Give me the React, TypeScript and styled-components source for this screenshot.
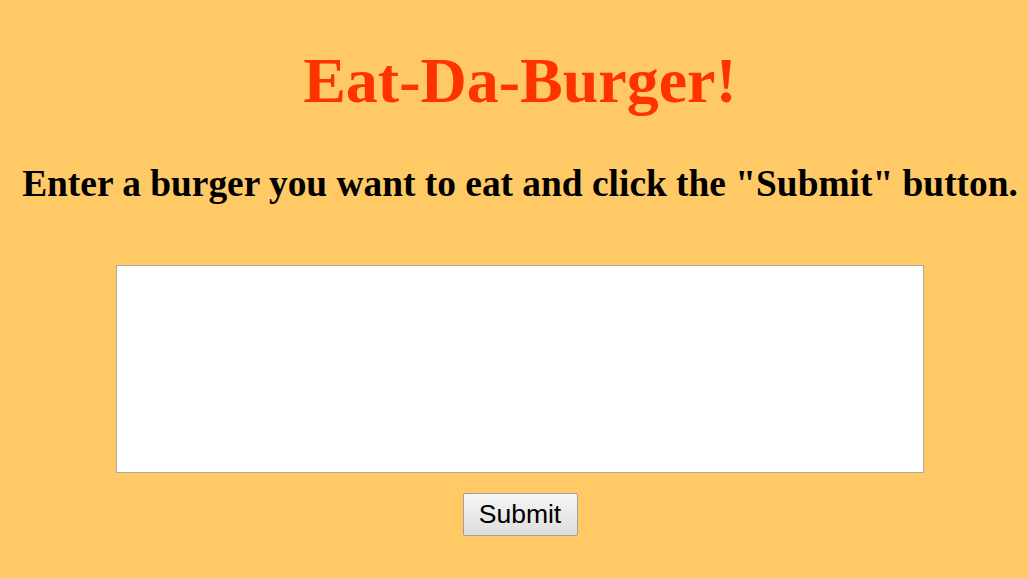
import React from "react";
import styled, { createGlobalStyle } from "styled-components";

const Global = createGlobalStyle`
  html, body { margin: 0; padding: 0; background: #ffca66; }
  body { font-family: "Liberation Serif", "Times New Roman", serif; }
`;

const Page = styled.div`
  min-height: 578px;
  display: flex;
  flex-direction: column;
  align-items: center;
  padding: 44px 0 0 12px;
  box-sizing: border-box;
`;

const Title = styled.h1`
  margin: 0;
  font-size: 64px;
  font-weight: bold;
  color: #ff3300;
  line-height: 74px;
`;

const Subtitle = styled.h2`
  margin: 45px 0 0;
  font-size: 37.4px;
  font-weight: bold;
  color: #000;
  line-height: 42px;
  white-space: nowrap;
`;

const Form = styled.form`
  margin-top: 60px;
  display: flex;
  flex-direction: column;
  align-items: center;
  gap: 20px;
`;

const TextArea = styled.textarea`
  width: 808px;
  height: 208px;
  box-sizing: border-box;
  border: 1px solid #a9a9a9;
  background: #fff;
  resize: none;
  outline: none;
  margin: 0;
  display: block;
`;

const Button = styled.button`
  width: 115px;
  height: 43px;
  font-family: "Liberation Sans", Arial, sans-serif;
  font-size: 26.5px;
  color: #000;
  border: 1px solid #a0a0a0;
  border-radius: 2px;
  background: linear-gradient(#f6f6f6, #dedede);
  padding: 0;
  cursor: pointer;
`;

export default function App() {
  return (
    <Page>
      <Global />
      <Title>Eat-Da-Burger!</Title>
      <Subtitle>Enter a burger you want to eat and click the "Submit" button.</Subtitle>
      <Form onSubmit={(e) => e.preventDefault()}>
        <TextArea />
        <Button type="submit">Submit</Button>
      </Form>
    </Page>
  );
}
